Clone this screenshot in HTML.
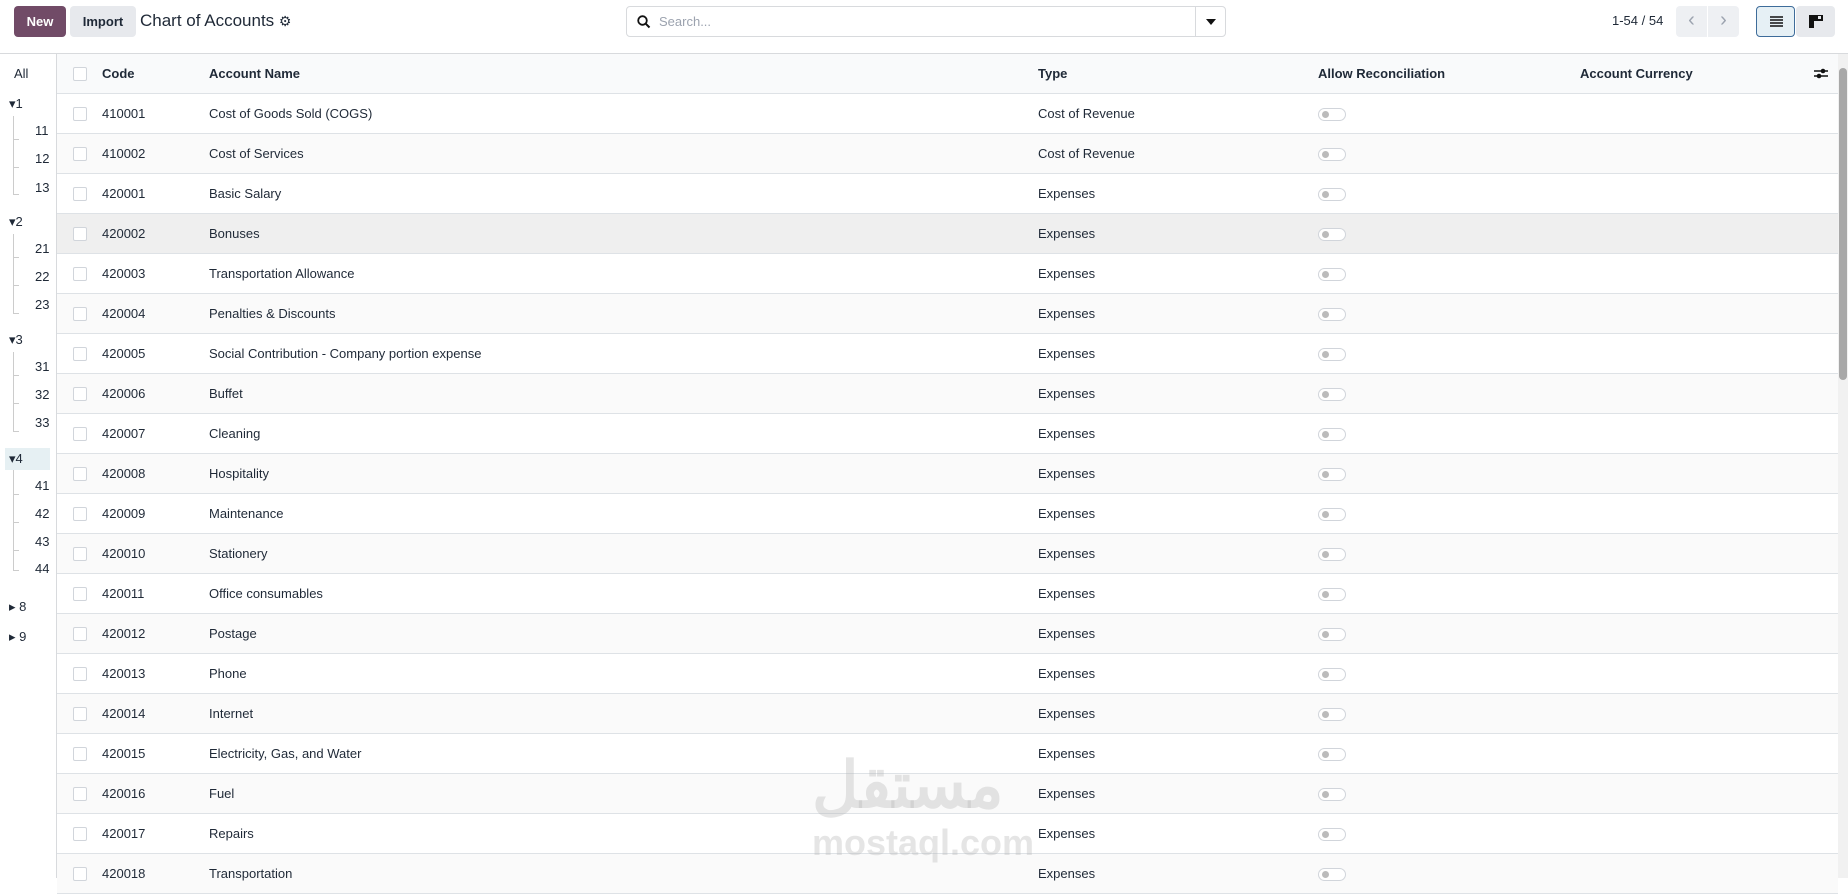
<!DOCTYPE html>
<html><head><meta charset="utf-8"><style>
*{box-sizing:border-box;margin:0;padding:0}
body{width:1848px;height:878px;overflow:hidden;background:#fff;font-family:"Liberation Sans",sans-serif;font-size:13px;color:#374151;position:relative}
.top{position:absolute;left:0;top:0;width:1848px;height:54px;border-bottom:1px solid #d8dadd;background:#fff}
.btn{position:absolute;top:6px;height:31px;border-radius:4px;font-size:13px;font-weight:bold;line-height:31px;text-align:center}
.new{left:14px;width:52px;background:#714b67;color:#fff}
.imp{left:70px;width:66px;background:#e7e9ed;color:#1f2937}
.title{position:absolute;left:140px;top:11px;font-size:17px;color:#1f2937}
.search{position:absolute;left:626px;top:6px;width:600px;height:31px;border:1px solid #d8dadd;border-radius:4px}
.search .dd{position:absolute;right:0;top:0;width:30px;height:29px;border-left:1px solid #d8dadd}
.pager{position:absolute;left:1612px;top:13px;font-size:13px;color:#1f2937}
.pb{position:absolute;top:6px;height:31px;width:31px;background:#eef0f3;color:#9ca3af;text-align:center;line-height:29px;font-size:20px}
.vb{position:absolute;top:6px;height:31px;width:39px;border-radius:4px}
.side{position:absolute;left:0;top:54px;width:57px;height:824px;border-right:1px solid #d8dadd}
.side div{position:absolute;font-size:13px;color:#1f2937}
.tbl{position:absolute;left:57px;top:54px;width:1781px}
.row{position:relative;height:40px;border-bottom:1px solid #dee2e6;font-size:13px;color:#1f2937}
.row:nth-child(odd){background:#fafafa}
.row.h{background:#f9fafb;font-weight:bold;color:#1f2937}
.row.hov{background:#efefef}
.row span{position:absolute;top:12px;white-space:nowrap}
.cb{position:absolute;left:16px;top:13px;width:14px;height:14px;border:1px solid #d1d5db;background:#fff;border-radius:2px}
.c1{left:45px}.c2{left:152px}.c3{left:981px}.c5{left:1523px}
.tg{position:absolute;left:1261px;top:14px;width:28px;height:13px;border:1px solid #d1d5db;border-radius:7px;background:#fff}
.tg:after{content:"";position:absolute;left:3px;top:2px;width:7px;height:7px;border-radius:50%;background:#bbb}
.sb{position:absolute;left:1838px;top:54px;width:10px;height:824px;background:#f1f1f1}
.sb div{position:absolute;left:1px;top:14px;width:8px;height:312px;background:#a8a8a8;border-radius:4px}
.tk{height:1px!important;width:6px;background:#ccc}
</style></head><body>
<div class="top">
<div class="btn new">New</div><div class="btn imp">Import</div>
<div class="title">Chart of Accounts <span style="font-size:14px">&#9881;</span></div>
<div class="search"><svg style="position:absolute;left:10px;top:8px" width="14" height="14" viewBox="0 0 14 14"><circle cx="5.5" cy="5.5" r="4.3" fill="none" stroke="#111" stroke-width="1.8"/><path d="M8.6 8.6L12.5 12.5" stroke="#111" stroke-width="2"/></svg><span style="position:absolute;left:32px;top:7px;color:#9ca3af">Search...</span><div class="dd"><svg style="position:absolute;left:10px;top:12px" width="10" height="6"><path d="M0 0h10L5 6z" fill="#111"/></svg></div></div>
<div class="pager">1-54 / 54</div>
<div class="pb" style="left:1676px;border-radius:4px 0 0 4px">&#8249;</div><div class="pb" style="left:1708px;border-radius:0 4px 4px 0">&#8250;</div>
<div class="vb" style="left:1756px;background:#e6f0f5;border:1px solid #3e6c9a"><svg style="position:absolute;left:13px;top:9px" width="13" height="11"><path d="M0 1h13M0 4h13M0 7h13M0 10h13" stroke="#111" stroke-width="1.6"/></svg></div>
<div class="vb" style="left:1796px;background:#e7e9ed"><svg style="position:absolute;left:13px;top:9px" width="14" height="13"><path d="M0 0h5v13H0zM5 0h9v6H5z" fill="#111"/><rect x="9" y="1" width="3" height="3" fill="#e7e9ed"/></svg></div>
</div>
<div class="side">
<div style="left:14px;top:12px">All</div>
<div style="left:9px;top:42px">&#9662;1</div><div style="left:35px;top:69px">11</div><div style="left:35px;top:97px">12</div><div style="left:35px;top:126px">13</div>
<div style="left:9px;top:160px">&#9662;2</div><div style="left:35px;top:187px">21</div><div style="left:35px;top:215px">22</div><div style="left:35px;top:243px">23</div>
<div style="left:9px;top:278px">&#9662;3</div><div style="left:35px;top:305px">31</div><div style="left:35px;top:333px">32</div><div style="left:35px;top:361px">33</div>
<div style="left:5px;top:394px;width:45px;height:22px;background:#e6f0f3"></div>
<div style="left:9px;top:397px">&#9662;4</div><div style="left:35px;top:424px">41</div><div style="left:35px;top:452px">42</div><div style="left:35px;top:480px">43</div><div style="left:35px;top:507px">44</div>
<div style="left:9px;top:545px">&#9656; 8</div><div style="left:9px;top:575px">&#9656; 9</div>
<div style="left:13px;top:62px;width:1px;height:78px;background:#ccc"></div>
<div style="left:13px;top:180px;width:1px;height:80px;background:#ccc"></div>
<div style="left:13px;top:298px;width:1px;height:80px;background:#ccc"></div>
<div style="left:13px;top:416px;width:1px;height:100px;background:#ccc"></div>
<div class="tk" style="left:13px;top:85px"></div><div class="tk" style="left:13px;top:113px"></div><div class="tk" style="left:13px;top:140px"></div>
<div class="tk" style="left:13px;top:203px"></div><div class="tk" style="left:13px;top:231px"></div><div class="tk" style="left:13px;top:259px"></div>
<div class="tk" style="left:13px;top:321px"></div><div class="tk" style="left:13px;top:349px"></div><div class="tk" style="left:13px;top:377px"></div>
<div class="tk" style="left:13px;top:440px"></div><div class="tk" style="left:13px;top:468px"></div><div class="tk" style="left:13px;top:496px"></div><div class="tk" style="left:13px;top:516px"></div>
</div>
<div class="tbl">
<div class="row h"><div class="cb"></div><span class="c1">Code</span><span class="c2">Account Name</span><span class="c3">Type</span><span style="left:1261px">Allow Reconciliation</span><span class="c5">Account Currency</span><svg style="position:absolute;left:1757px;top:13px" width="14" height="13"><path d="M0 4h14M0 9h14" stroke="#111" stroke-width="1.5"/><circle cx="9" cy="4" r="2.3" fill="#111"/><circle cx="5" cy="9" r="2.3" fill="#111"/></svg></div>
<div class="row"><div class="cb"></div><span class="c1">410001</span><span class="c2">Cost of Goods Sold (COGS)</span><span class="c3">Cost of Revenue</span><div class="tg"></div></div>
<div class="row"><div class="cb"></div><span class="c1">410002</span><span class="c2">Cost of Services</span><span class="c3">Cost of Revenue</span><div class="tg"></div></div>
<div class="row"><div class="cb"></div><span class="c1">420001</span><span class="c2">Basic Salary</span><span class="c3">Expenses</span><div class="tg"></div></div>
<div class="row hov"><div class="cb"></div><span class="c1">420002</span><span class="c2">Bonuses</span><span class="c3">Expenses</span><div class="tg"></div></div>
<div class="row"><div class="cb"></div><span class="c1">420003</span><span class="c2">Transportation Allowance</span><span class="c3">Expenses</span><div class="tg"></div></div>
<div class="row"><div class="cb"></div><span class="c1">420004</span><span class="c2">Penalties &amp; Discounts</span><span class="c3">Expenses</span><div class="tg"></div></div>
<div class="row"><div class="cb"></div><span class="c1">420005</span><span class="c2">Social Contribution - Company portion expense</span><span class="c3">Expenses</span><div class="tg"></div></div>
<div class="row"><div class="cb"></div><span class="c1">420006</span><span class="c2">Buffet</span><span class="c3">Expenses</span><div class="tg"></div></div>
<div class="row"><div class="cb"></div><span class="c1">420007</span><span class="c2">Cleaning</span><span class="c3">Expenses</span><div class="tg"></div></div>
<div class="row"><div class="cb"></div><span class="c1">420008</span><span class="c2">Hospitality</span><span class="c3">Expenses</span><div class="tg"></div></div>
<div class="row"><div class="cb"></div><span class="c1">420009</span><span class="c2">Maintenance</span><span class="c3">Expenses</span><div class="tg"></div></div>
<div class="row"><div class="cb"></div><span class="c1">420010</span><span class="c2">Stationery</span><span class="c3">Expenses</span><div class="tg"></div></div>
<div class="row"><div class="cb"></div><span class="c1">420011</span><span class="c2">Office consumables</span><span class="c3">Expenses</span><div class="tg"></div></div>
<div class="row"><div class="cb"></div><span class="c1">420012</span><span class="c2">Postage</span><span class="c3">Expenses</span><div class="tg"></div></div>
<div class="row"><div class="cb"></div><span class="c1">420013</span><span class="c2">Phone</span><span class="c3">Expenses</span><div class="tg"></div></div>
<div class="row"><div class="cb"></div><span class="c1">420014</span><span class="c2">Internet</span><span class="c3">Expenses</span><div class="tg"></div></div>
<div class="row"><div class="cb"></div><span class="c1">420015</span><span class="c2">Electricity, Gas, and Water</span><span class="c3">Expenses</span><div class="tg"></div></div>
<div class="row"><div class="cb"></div><span class="c1">420016</span><span class="c2">Fuel</span><span class="c3">Expenses</span><div class="tg"></div></div>
<div class="row"><div class="cb"></div><span class="c1">420017</span><span class="c2">Repairs</span><span class="c3">Expenses</span><div class="tg"></div></div>
<div class="row"><div class="cb"></div><span class="c1">420018</span><span class="c2">Transportation</span><span class="c3">Expenses</span><div class="tg"></div></div>
</div>
<div style="position:absolute;left:812px;top:748px;font-size:64px;font-weight:bold;color:rgba(180,180,180,0.35);font-family:'Liberation Sans','Noto Sans CJK SC',sans-serif">مستقل</div>
<div style="position:absolute;left:812px;top:822px;font-size:36px;font-weight:bold;color:rgba(180,180,180,0.35)">mostaql.com</div>
<div class="sb"><div></div></div>
</body></html>
